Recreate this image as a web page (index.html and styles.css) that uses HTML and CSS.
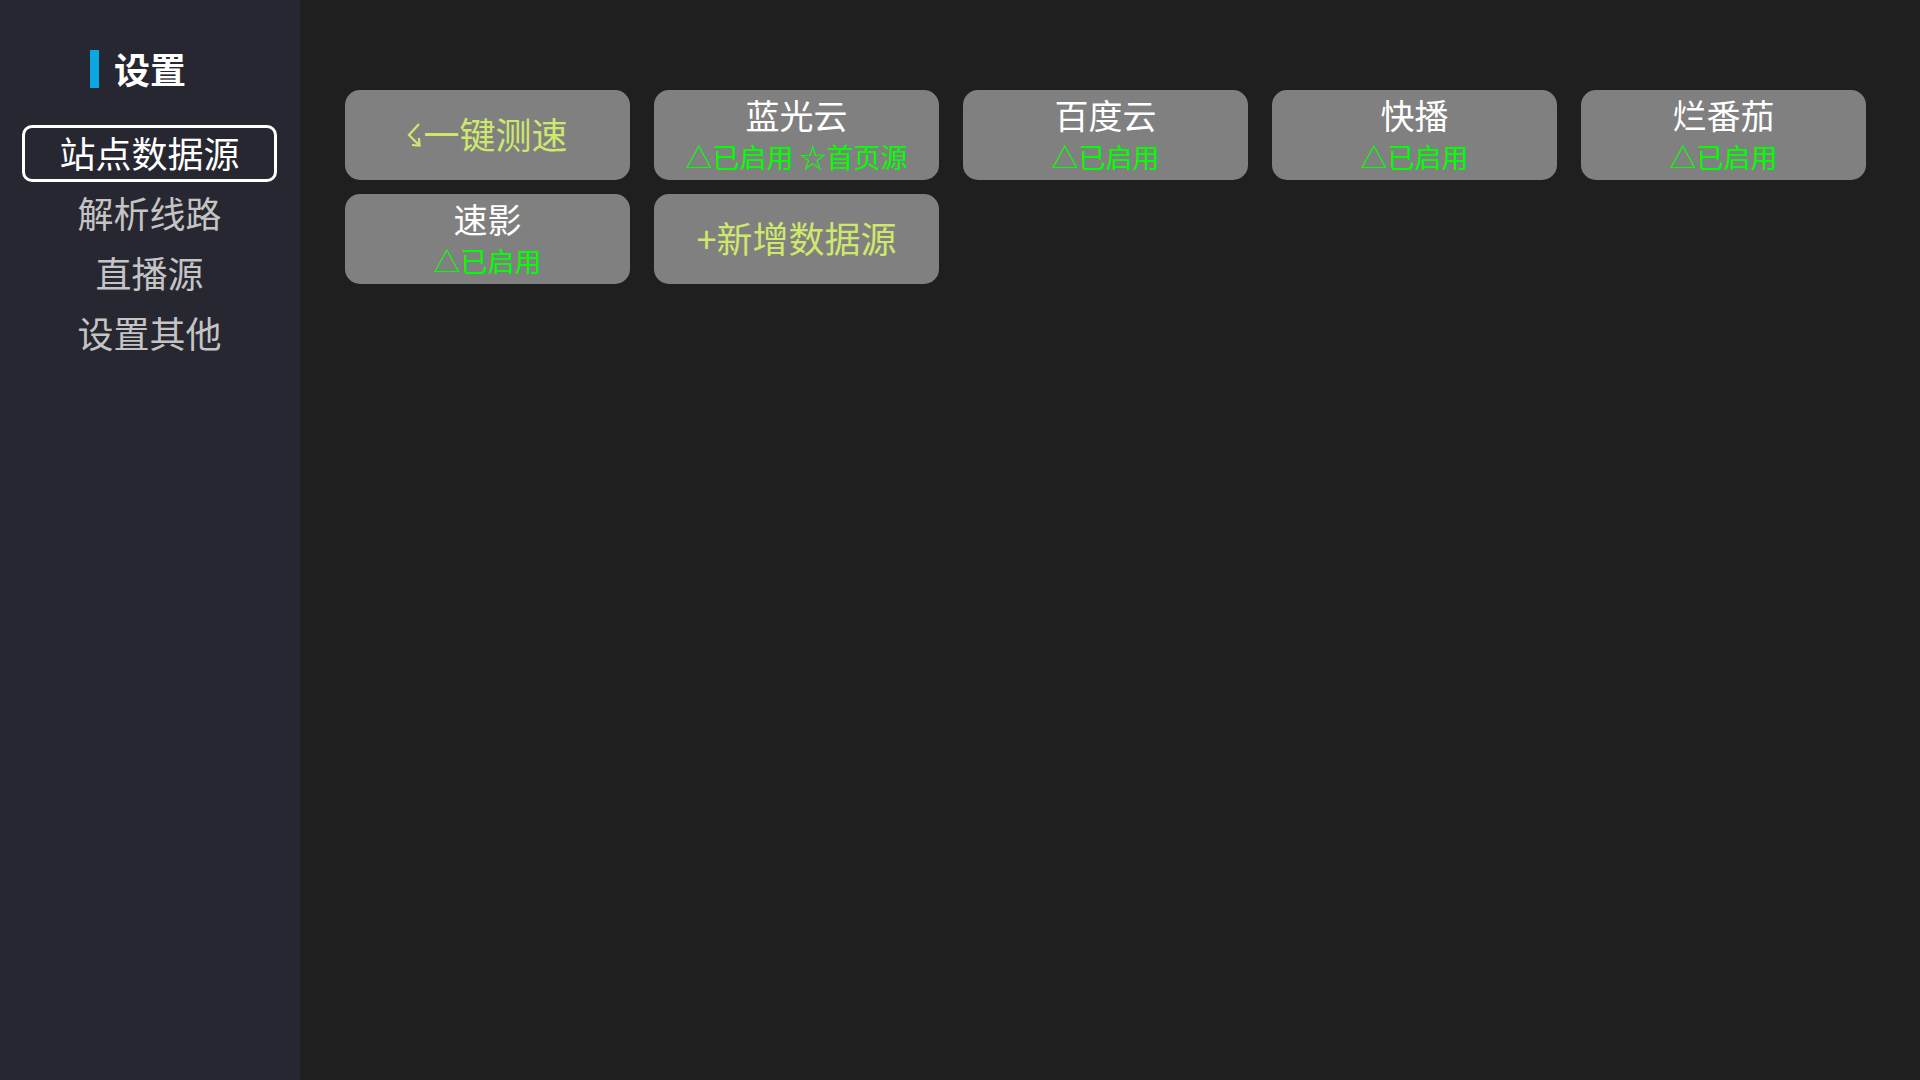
FILE: index.html
```html
<!DOCTYPE html>
<html lang="zh-CN">
<head>
<meta charset="utf-8">
<title>设置</title>
<link rel="stylesheet" href="styles.css">
</head>
<body>
<div class="app">
  <aside class="sidebar">
    <div class="side-title"><span class="bar"></span><span class="title-text">设置</span></div>
    <nav class="menu">
      <div class="menu-item active">站点数据源</div>
      <div class="menu-item">解析线路</div>
      <div class="menu-item">直播源</div>
      <div class="menu-item">设置其他</div>
    </nav>
  </aside>
  <main class="content">
    <div class="grid">
      <div class="card action"><svg class="bolt" viewBox="0 0 15 24" width="15" height="24"><path d="M12 1 L2 12 L12 22" fill="none" stroke="currentColor" stroke-width="2.2"/><path d="M5 22 L12.5 22.5 L12 15" fill="none" stroke="currentColor" stroke-width="2.2"/></svg><span>一键测速</span></div>
      <div class="card"><div class="name">蓝光云</div><div class="status">△已启用 ☆首页源</div></div>
      <div class="card"><div class="name">百度云</div><div class="status">△已启用</div></div>
      <div class="card"><div class="name">快播</div><div class="status">△已启用</div></div>
      <div class="card"><div class="name">烂番茄</div><div class="status">△已启用</div></div>
      <div class="card"><div class="name">速影</div><div class="status">△已启用</div></div>
      <div class="card action"><span>+新增数据源</span></div>
    </div>
  </main>
</div>
</body>
</html>
```
FILE: styles.css
```css
html, body {
  margin: 0;
  padding: 0;
  height: 100%;
}
body {
  font-family: "Noto Sans CJK SC", "Noto Sans", sans-serif;
  background: #1f1f1f;
}
.app {
  display: flex;
  height: 100vh;
}
.sidebar {
  width: 300px;
  flex: none;
  background: #272731;
  padding-top: 43px;
  box-sizing: border-box;
}
.side-title {
  display: flex;
  align-items: center;
  height: 50px;
  padding-left: 90px;
  gap: 15px;
}
.bar {
  display: block;
  width: 9px;
  height: 38px;
  margin-top: 1px;
  background: #0aa8e3;
}
.title-text {
  color: #ffffff;
  font-size: 36px;
  font-weight: 700;
  line-height: 50px;
}
.menu {
  margin-top: 32px;
  display: flex;
  flex-direction: column;
  gap: 3px;
  padding-left: 22px;
}
.menu-item {
  width: 255px;
  height: 57px;
  box-sizing: border-box;
  border: 3px solid transparent;
  border-radius: 10px;
  color: #c4c4c4;
  font-size: 36px;
  line-height: 49px;
  text-align: center;
}
.menu-item.active {
  border-color: #ffffff;
  color: #ffffff;
}
.content {
  flex: 1;
  padding: 90px 0 0 45px;
}
.grid {
  display: grid;
  grid-template-columns: repeat(5, 285px);
  grid-auto-rows: 90px;
  column-gap: 24px;
  row-gap: 14px;
}
.card {
  background: #808080;
  border-radius: 15px;
  display: flex;
  flex-direction: column;
  align-items: center;
  justify-content: center;
  text-align: center;
}
.card.action {
  flex-direction: row;
  color: #cde86c;
  font-size: 36px;
  line-height: 50px;
  padding-bottom: 5px;
  box-sizing: border-box;
}
.bolt {
  display: block;
  margin-right: 1px;
  margin-top: 5px;
}
.name {
  color: #ffffff;
  font-size: 34px;
  line-height: 42px;
  margin-top: -3px;
}
.status {
  color: #00ff00;
  font-size: 27px;
  line-height: 40px;
  margin-top: 1px;
  margin-bottom: -4px;
}
```
